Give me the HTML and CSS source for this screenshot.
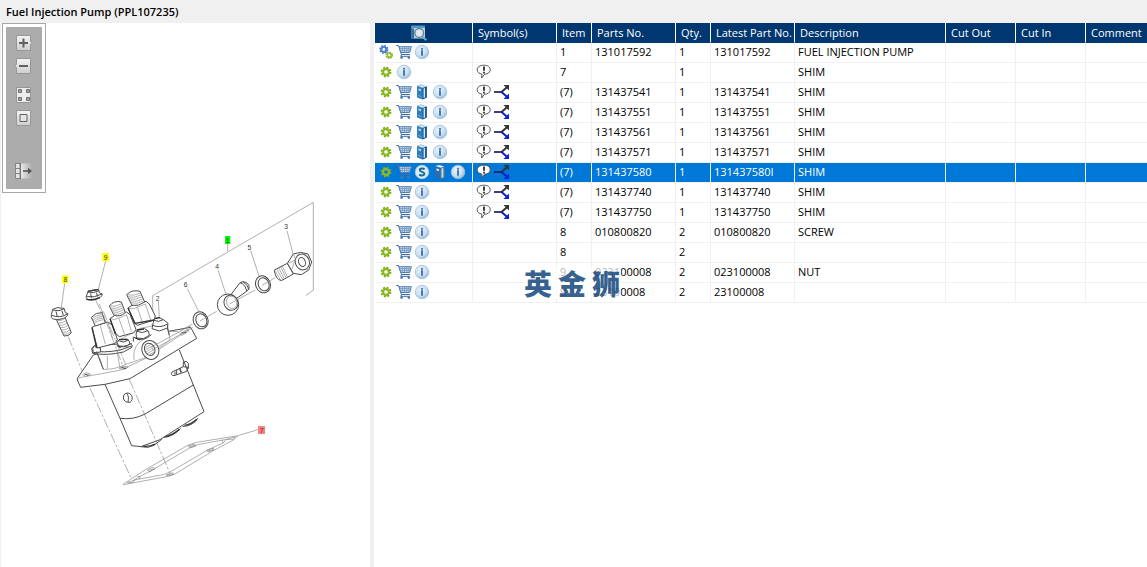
FILE: index.html
```
<!DOCTYPE html>
<html lang="en">

<head>
  <meta charset="UTF-8">
  <meta name="viewport" content="width=device-width, initial-scale=1.0">
  <title>Fuel Injection Pump (PPL107235)</title>
  <link rel="stylesheet" href="styles.css">
</head>

<body>
  <!-- shared icons -->
  <svg class="sprite" aria-hidden="true">
    <defs>
      <linearGradient id="btnFace" x1="0" y1="0" x2="0" y2="1">
        <stop offset="0" stop-color="#f4f4f4"/>
        <stop offset="1" stop-color="#cfcfcf"/>
      </linearGradient>
      <linearGradient id="exitFace" x1="0" y1="0" x2="1" y2="0">
        <stop offset="0" stop-color="#ededed"/>
        <stop offset="1" stop-color="#acacac"/>
      </linearGradient>
      <radialGradient id="discFace" cx="0.4" cy="0.35" r="0.7">
        <stop offset="0" stop-color="#e8f2fa"/>
        <stop offset="0.6" stop-color="#cbdff0"/>
        <stop offset="1" stop-color="#8fb4d4"/>
      </radialGradient>
    </defs>
    <symbol id="gear" viewBox="0 0 16 16">
      <circle cx="8" cy="8" r="3" fill="none" stroke="#8dba22" stroke-width="2.4"/>
      <circle cx="8" cy="8" r="4.6" fill="none" stroke="#7fac1e" stroke-width="1.6" stroke-dasharray="2 1.61"/>
    </symbol>
    <symbol id="gears" viewBox="0 0 16 16">
      <circle cx="5.8" cy="5.5" r="2.5" fill="none" stroke="#4a7fdd" stroke-width="2.2"/>
      <circle cx="5.8" cy="5.5" r="3.9" fill="none" stroke="#3668c8" stroke-width="1.3" stroke-dasharray="1.6 1.46"/>
      <circle cx="11.3" cy="11.2" r="2" fill="none" stroke="#98c42e" stroke-width="1.8"/>
      <circle cx="11.3" cy="11.2" r="3.2" fill="none" stroke="#7aa51c" stroke-width="1.2" stroke-dasharray="1.3 1.21"/>
    </symbol>
    <symbol id="cart" viewBox="0 0 16 16">
      <path d="M.3 1.5H2.6L5.4 10.5H14M5.4 10.5 4.8 12.3H13.8" fill="none" stroke="#3f6fa5" stroke-width="1"/>
      <path d="M3 2.7H15.4L13.6 8.5H4.8Z" fill="#d5e2ef" stroke="#4f7fb5" stroke-width="1"/>
      <path d="M6.2 3V8.5M8.5 3V8.5M10.8 3V8.5M12.9 3V8.5M4 4.6H15M4.5 6.6H14.3" stroke="#5c88bb" stroke-width=".7"/>
      <circle cx="5.6" cy="13.6" r="1.3" fill="#4679b3"/>
      <circle cx="12.8" cy="13.6" r="1.3" fill="#4679b3"/>
    </symbol>
    <symbol id="info" viewBox="0 0 16 16">
      <circle cx="8" cy="8" r="6.8" fill="url(#discFace)" stroke="#a3c1db" stroke-width=".8"/>
      <path d="M8 4V5.8M7 7.1H8V11.8" fill="none" stroke="#3571b1" stroke-width="1.8"/>
    </symbol>
    <symbol id="supersede" viewBox="0 0 16 16">
      <circle cx="8" cy="8" r="6.8" fill="#dcebf5" stroke="#a8c8e0" stroke-width=".8"/>
      <path d="M10.6 5.4C9.4 4.1 5.7 4.2 5.8 6.2S10.5 7.6 10.4 9.8 6.6 11.9 5.3 10.5" fill="none" stroke="#146a96" stroke-width="1.9"/>
    </symbol>
    <symbol id="book" viewBox="0 0 16 16">
      <path d="M3 2 7 .6 12.8 2.6V13.4L8.6 15.4 3 13.4Z" fill="#2f7fbf"/>
      <path d="M8.6 4 12.8 2.6V13.4L8.6 15.4Z" fill="#1c5a92"/>
      <path d="M9.6 4.4 11 3.9V13.4L9.6 14Z" fill="#d6e8f4"/>
      <path d="M3.5 2 8.6 3.8 12.3 2.6 7.2 1Z" fill="#dcecf7"/>
      <path d="M4.4 4.4 7 5.3V7.2L4.4 6.3Z" fill="#b5d5ec"/>
      <path d="M4 11.4 7.6 12.6" stroke="#67a9d8" stroke-width="1"/>
    </symbol>
    <symbol id="bookPale" viewBox="0 0 16 16">
      <path d="M3 2 7 .6 12.8 2.6V13.4L8.6 15.4 3 13.4Z" fill="#2a6ead"/>
      <path d="M8.6 4 12.8 2.6V13.4L8.6 15.4Z" fill="#4d7792"/>
      <path d="M9.4 4.4 11.4 3.7V13.2L9.4 14Z" fill="#c3d6e3"/>
      <path d="M3.5 2 8.6 3.8 12.3 2.6 7.2 1ZM4.4 4.4 7 5.3V7.2L4.4 6.3Z" fill="#e4f0f8"/>
    </symbol>
    <symbol id="note" viewBox="0 0 16 16">
      <path d="M7.8 1.2C11.8 1.2 14.2 3 14.2 5.8S11.6 10.2 8.6 10.2L5.6 14 6 10.2C3 9.6 1.2 8.2 1.2 5.8 1.2 3 4 1.2 7.8 1.2Z" fill="#fff" stroke="#555" stroke-width="1"/>
      <path d="M8 2.6V6.8M8 7.8V9.4" stroke="#111" stroke-width="1.6"/>
    </symbol>
    <symbol id="branch" viewBox="0 0 16 16">
      <path d="M0 8H8.5" stroke="#1c1c6c" stroke-width="1.7"/>
      <path d="M7.5 8 13 3.2" stroke="#333" stroke-width="2"/>
      <path d="M9.5 1H15V6.5Z" fill="#333"/>
      <path d="M7.5 8 13 12.8" stroke="#0d1fc0" stroke-width="2"/>
      <path d="M9.5 15H15V9.5Z" fill="#0d1fe0"/>
    </symbol>
    <symbol id="preview" viewBox="0 0 16 16">
      <path d="M.5.8H14V13.5H.5Z" fill="#b9d0dd"/>
      <path d="M.5.8H14V3H.5Z" fill="#4f9ac6"/>
      <path d="M.5 3.5H3V13.5H.5Z" fill="#286f9f"/>
      <circle cx="8.2" cy="8" r="4.3" fill="#e0e8ec" stroke="#697c89" stroke-width="1.3"/>
      <path d="M11.3 11.2 15.2 15.2" stroke="#65aed8" stroke-width="2"/>
    </symbol>
  </svg>

  <h1 class="title">Fuel Injection Pump (PPL107235)</h1>

  <main class="main">
    <section class="drawing">
      <div class="toolbar">
        <div class="tools">
          <div class="tool-group">
            <button type="button" aria-label="Zoom in">
              <svg viewBox="0 0 18 16">
                <path d="M1.5.5H15.5V6.5L17.5 8 15.5 9.5V15.5H1.5Z" fill="url(#btnFace)" stroke="#969696"/>
                <path d="M4 8H13M8.5 3.5V12.5" stroke="#606060" stroke-width="2"/>
              </svg>
            </button>
            <button type="button" aria-label="Zoom out">
              <svg viewBox="0 0 18 16">
                <path d="M1.5.5H15.5V15.5H1.5V9.5L-.5 8 1.5 6.5Z" fill="url(#btnFace)" stroke="#969696"/>
                <path d="M4 8H13" stroke="#606060" stroke-width="2"/>
              </svg>
            </button>
          </div>
          <div class="tool-group">
            <button type="button" aria-label="Show all">
              <svg viewBox="0 0 18 16">
                <path d="M1.5.5H15.5V15.5H1.5Z" fill="#ececec" stroke="#969696"/>
                <path d="M3.5 2.5H6.5V5.5H3.5ZM11.5 2.5H14.5V5.5H11.5ZM3.5 10.5H6.5V13.5H3.5ZM11.5 10.5H14.5V13.5H11.5Z" fill="#a4a4a4" stroke="#707070"/>
              </svg>
            </button>
            <button type="button" aria-label="Fit to window">
              <svg viewBox="0 0 18 16">
                <path d="M1.5.5H15.5V15.5H1.5Z" fill="url(#btnFace)" stroke="#969696"/>
                <path d="M5 4.5H12V11.5H5Z" fill="#e4e4e4" stroke="#606060"/>
              </svg>
            </button>
          </div>
          <div class="tool-group tool-group-last">
            <button type="button" aria-label="Show list">
              <svg viewBox="0 0 18 16">
                <path d="M5 .5H17V15.5H5Z" fill="url(#exitFace)"/>
                <path d="M.5.5H5V5.5H.5ZM.5 5.5H5V10.5H.5ZM.5 10.5H5V15.5H.5Z" fill="#e4e4e4" stroke="#858585"/>
                <path d="M5.5 0V16" stroke="#777"/>
                <path d="M8 8H14" stroke="#555" stroke-width="1.6"/>
                <path d="M13 4.8 17 8 13 11.2Z" fill="#555"/>
              </svg>
            </button>
          </div>
        </div>
      </div>

      <svg class="diagram" viewBox="0 0 1107 1635" role="img" aria-label="Exploded view of the pump">
        <!-- assembly bracket and leaders -->
        <g class="thin">
          <path d="M455 864V821L937 541V804L914 821"/>
          <path d="M680 666V688M191 784 181 856M314 717 292 802M774 1222 714 1240"/>
          <path d="M472 836 475 888M559 800 593 868M651 744 676 820M749 686 774 762M858 626 876 696"/>
        </g>
        <!-- axes -->
        <g class="thin axis">
          <path d="M202 944 250 1064M267 1099 392 1372"/>
          <path d="M284 834 374 1034M385 1072 507 1354"/>
        </g>

        <!-- body -->
        <g transform="translate(177 954)">
          <path class="edge" d="M135 133 180 235 215 317 245 320M358 30 400 135 432 215 300 299 245 319M180 235Q222 240 255 222L400 135"/>
          <path class="edge" d="M242 320Q265 326 282 316L305 298M310 292Q335 292 362 266M368 260Q402 256 414 234"/>
          <path class="heavy" d="M250 319Q270 320 285 312M316 290Q338 286 358 268M374 256Q394 254 410 238"/>
          <path class="edge" d="M192 164Q204 153 215 166 220 180 210 187 192 188 190 174ZM200 160Q208 168 204 186"/>
          <path class="edge" d="M336 96 370 80 384 82 380 94 342 107Q330 106 336 96ZM350 90V104M362 84V98M370 80V66Q380 60 385 70V86M345 95V104M356 88 366 96"/>
        </g>

        <!-- mounting flange -->
        <g transform="translate(237 774)">
          <path class="face edge" d="M-8 295 -8 300 2 322 75 313 150 296 350 175 332 142 265 154 40 225Z"/>
          <path class="thin" d="M-8 295Q10 290 60 282L122 270 195 236 332 145"/>
          <path class="thin" d="M8 284 20 278 32 283 18 289ZM118 266 130 259 145 261 134 268ZM300 162 322 148 326 154 306 166Z"/>
          <path class="edge" d="M14 282 26 286M124 262 138 266M305 158 318 158"/>
        </g>

        <!-- upper housing -->
        <g transform="translate(237 774)">
          <path class="face thin" d="M50 215 70 268Q105 270 145 250L200 232 270 180 262 130 180 145 110 185Z"/>
          <path class="face edge" d="M35 205Q40 195 60 196L145 190Q158 190 156 202L130 216Q80 228 38 220ZM38 212Q70 220 120 210L155 198"/>
          <path class="face edge" d="M38 206 44 196H60L62 216 40 218ZM112 188 118 178 144 178 150 190 140 200 116 200ZM168 162 172 150 194 146 206 154 208 166 190 176 170 174ZM220 127 222 117 238 113 250 119 264 130 262 144 238 153 216 146Z"/>
          <path class="edge" d="M50 215 70 268M44 200 60 204M118 183Q130 190 145 180M110 195Q130 205 155 190M170 154Q186 162 204 152M162 172Q190 188 214 164M220 121Q236 128 250 119M215 135Q240 146 263 132M262 144 268 166M160 170V185"/>
          <path class="heavy" d="M117 179 142 178M171 150 192 147M222 116 240 113M112 197 122 202M166 174 180 180"/>
          <path class="thin" d="M268 154 282 154 298 156M162 240Q158 210 175 190L190 178M70 268 60 236M82 228V266M110 208 120 264"/>
        </g>

        <!-- delivery valve holders -->
        <g transform="translate(237 774)">
          <path class="face edge" d="M36 142 46 137 84 126 98 136 112 178 106 190 52 204Z"/>
          <path class="face edge" d="M34 112Q48 96 66 98L76 128 46 138Z"/>
          <path class="thin" d="M35 117Q50 103 67 104M37 122Q52 108 69 109M39 127Q54 113 71 114M41 132Q56 118 73 119M61 136 76 192M84 128 98 176"/>
          <path class="face edge" d="M90 116 104 106 140 96 150 104 168 148 162 158 118 170 108 162Z"/>
          <path class="face edge" d="M88 78Q102 60 124 66L136 98Q120 112 102 106Z"/>
          <path class="thin" d="M88 78Q104 82 126 71M91 84Q108 89 128 77M93 90Q110 95 130 83M96 96Q113 101 132 89M99 102Q116 107 134 95"/>
          <path class="thin" d="M117 116 134 164M140 104 154 154M90 116Q104 122 117 114L140 104"/>
          <path class="face edge" d="M144 84 156 76 198 64 208 72 226 108 222 120 172 136 164 130Z"/>
          <path class="face edge" d="M140 44Q155 28 180 34L194 66Q176 80 156 76Z"/>
          <path class="thin" d="M140 44Q158 50 181 39M143 50Q160 56 183 45M146 56Q163 62 185 51M149 62Q166 68 188 57M152 68Q169 74 190 63"/>
          <path class="thin" d="M172 82 188 130M196 72 212 120M144 84Q160 90 172 82L196 72"/>
          <path class="heavy" d="M90 116 106 162M144 84 165 130 222 120M50 204 36 142"/>
          <path class="thin axis" d="M58 72 130 262M70 94 138 256"/>
          <!-- inlet port -->
          <ellipse class="face edge" cx="211" cy="210" rx="25" ry="29" transform="rotate(-25 211 210)"/>
          <ellipse class="edge" cx="209" cy="208" rx="15" ry="19" transform="rotate(-25 209 208)"/>
          <path class="thin" d="M196 203 212 194M196 209 218 198M198 215 221 203M201 221 223 209M206 226 222 216"/>
          <path class="thin" d="M213 202 330 138M216 210 338 143"/>
        </g>

        <!-- 8 screw, 9 nut -->
        <g transform="translate(-3 504)">
          <path class="face edge" d="M168 386 194 380 214 428Q206 440 192 438Z"/>
          <path class="thin" d="M170 392Q185 394 197 384M173 399Q188 401 200 391M176 406Q191 408 203 398M180 413Q194 415 206 405M183 420Q197 422 209 412M186 427Q200 429 211 419M189 433Q202 435 213 425"/>
          <path class="face edge" d="M154 374 158 358 172 353 192 355 196 368 204 371Q202 384 180 388 156 390 154 382Z"/>
          <path class="edge" d="M158 360Q178 366 193 356M168 364 172 380M186 362 190 376M155 376Q180 386 202 372"/>
          <path class="face edge" d="M258 322 264 304 280 300 296 298 298 308 307 312Q306 324 282 330 260 332 258 322Z"/>
          <path class="edge" d="M262 306Q280 312 297 302M272 310 274 324M290 308 292 320M260 320Q284 324 306 312"/>
          <path class="heavy" d="M264 304 294 299M259 328Q280 332 300 322"/>
        </g>

        <!-- 3 joint bolt, 4 eye, 5 and 6 washers -->
        <g transform="translate(537 504)">
          <path class="face edge" d="M283 240 322 220 340 252 304 272Q286 268 283 240Z"/>
          <path class="thin" d="M290 237 308 269M296 234 313 266M302 231 318 263M307 229 322 260M286 244 302 271"/>
          <path class="face edge" d="M322 220 340 192 362 187 384 192 395 216 386 240 364 254 340 250Z"/>
          <ellipse class="edge" cx="367" cy="216" rx="21" ry="24" transform="rotate(-20 367 216)"/>
          <ellipse class="edge" cx="366" cy="216" rx="10" ry="14" transform="rotate(-20 366 216)"/>
          <path class="thin" d="M340 192 346 206 336 238M322 220 342 212M386 240 376 236"/>
          <ellipse class="ring" cx="249" cy="283" rx="22" ry="26" transform="rotate(-22 249 283)"/>
          <ellipse class="ring" cx="251" cy="283" rx="16" ry="20" transform="rotate(-22 251 283)"/>
          <path class="face edge" d="M152 315 180 278Q196 270 207 286 210 298 200 304L170 325Z"/>
          <path class="edge" d="M180 278Q196 282 200 304M188 275Q204 284 206 300"/>
          <circle class="face edge" cx="144" cy="344" r="32"/>
          <ellipse class="edge" cx="153" cy="338" rx="21" ry="23" transform="rotate(-20 153 338)"/>
          <ellipse class="thin" cx="155" cy="337" rx="15" ry="19" transform="rotate(-20 155 337)"/>
          <ellipse class="ring" cx="62" cy="391" rx="22" ry="26" transform="rotate(-22 62 391)"/>
          <ellipse class="ring" cx="64" cy="391" rx="16" ry="20" transform="rotate(-22 64 391)"/>
          <path class="thin" d="M0 422 38 402M60 393 110 364M148 342 226 300M246 286 284 264"/>
        </g>

        <!-- 7 shim -->
        <g class="thin" transform="translate(177 954)">
          <path d="M190 432 212 418 258 388 385 315 410 307 535 287 520 300 460 332 345 402 320 410 190 434Z"/>
          <path d="M235 412 270 394 392 322 412 314 500 298 490 308 440 332 330 396 310 404 222 420Z"/>
          <path d="M262 390 278 382 286 386 268 396ZM384 318 404 312 408 318 390 324ZM440 330 460 324 462 330 444 336ZM500 298 526 290 520 298ZM318 406 336 398 342 402 328 408ZM202 428 224 420 218 428Z"/>
          <path d="M266 392 282 386M388 320 406 316M444 333 460 328M322 404 338 402M232 408 240 410 238 418M486 300 490 310"/>
        </g>

        <!-- callouts -->
        <g class="callout">
          <rect x="672" y="642" width="16" height="24" fill="#00ff00"/>
          <rect x="183" y="760" width="19" height="24" fill="#ffff00"/>
          <rect x="304" y="693" width="20" height="25" fill="#ffff00"/>
          <rect x="771" y="1212" width="21" height="24" fill="#ff7f7f"/>
          <text x="680" y="662">1</text>
          <text x="193" y="780">8</text>
          <text x="314" y="714">9</text>
          <text x="782" y="1232" fill="#a44">7</text>
          <text x="470" y="837">2</text>
          <text x="554" y="796">6</text>
          <text x="648" y="740">4</text>
          <text x="745" y="683">5</text>
          <text x="855" y="622">3</text>
        </g>
      </svg>
    </section>

    <section class="parts">
      <table>
        <colgroup>
          <col class="w-icons">
          <col class="w-mid">
          <col class="w-small">
          <col class="w-mid">
          <col class="w-small">
          <col class="w-mid">
          <col class="w-desc">
          <col class="w-cut">
          <col class="w-cut">
          <col>
        </colgroup>
        <thead>
          <tr>
            <th class="preview"><svg role="img" aria-label="Preview"><use href="#preview"/></svg></th>
            <th>Symbol(s)</th>
            <th>Item</th>
            <th>Parts No.</th>
            <th>Qty.</th>
            <th>Latest Part No.</th>
            <th>Description</th>
            <th>Cut Out</th>
            <th>Cut In</th>
            <th>Comment</th>
          </tr>
        </thead>
        <tbody>
          <tr>
            <td><div class="icons"><svg><use href="#gears"/></svg><svg><use href="#cart"/></svg><svg><use href="#info"/></svg></div></td>
            <td></td>
            <td>1</td><td>131017592</td><td>1</td><td>131017592</td><td>FUEL INJECTION PUMP</td><td></td><td></td><td></td>
          </tr>
          <tr>
            <td><div class="icons"><svg><use href="#gear"/></svg><svg><use href="#info"/></svg></div></td>
            <td><div class="icons"><svg><use href="#note"/></svg></div></td>
            <td>7</td><td></td><td>1</td><td></td><td>SHIM</td><td></td><td></td><td></td>
          </tr>
          <tr>
            <td><div class="icons"><svg><use href="#gear"/></svg><svg><use href="#cart"/></svg><svg><use href="#book"/></svg><svg><use href="#info"/></svg></div></td>
            <td><div class="icons"><svg><use href="#note"/></svg><svg><use href="#branch"/></svg></div></td>
            <td>(7)</td><td>131437541</td><td>1</td><td>131437541</td><td>SHIM</td><td></td><td></td><td></td>
          </tr>
          <tr>
            <td><div class="icons"><svg><use href="#gear"/></svg><svg><use href="#cart"/></svg><svg><use href="#book"/></svg><svg><use href="#info"/></svg></div></td>
            <td><div class="icons"><svg><use href="#note"/></svg><svg><use href="#branch"/></svg></div></td>
            <td>(7)</td><td>131437551</td><td>1</td><td>131437551</td><td>SHIM</td><td></td><td></td><td></td>
          </tr>
          <tr>
            <td><div class="icons"><svg><use href="#gear"/></svg><svg><use href="#cart"/></svg><svg><use href="#book"/></svg><svg><use href="#info"/></svg></div></td>
            <td><div class="icons"><svg><use href="#note"/></svg><svg><use href="#branch"/></svg></div></td>
            <td>(7)</td><td>131437561</td><td>1</td><td>131437561</td><td>SHIM</td><td></td><td></td><td></td>
          </tr>
          <tr>
            <td><div class="icons"><svg><use href="#gear"/></svg><svg><use href="#cart"/></svg><svg><use href="#book"/></svg><svg><use href="#info"/></svg></div></td>
            <td><div class="icons"><svg><use href="#note"/></svg><svg><use href="#branch"/></svg></div></td>
            <td>(7)</td><td>131437571</td><td>1</td><td>131437571</td><td>SHIM</td><td></td><td></td><td></td>
          </tr>
          <tr class="selected">
            <td><div class="icons"><svg><use href="#gear"/></svg><svg><use href="#cart"/></svg><svg><use href="#supersede"/></svg><svg><use href="#bookPale"/></svg><svg><use href="#info"/></svg></div></td>
            <td><div class="icons"><svg><use href="#note"/></svg><svg><use href="#branch"/></svg></div></td>
            <td>(7)</td><td>131437580</td><td>1</td><td>131437580I</td><td>SHIM</td><td></td><td></td><td></td>
          </tr>
          <tr>
            <td><div class="icons"><svg><use href="#gear"/></svg><svg><use href="#cart"/></svg><svg><use href="#info"/></svg></div></td>
            <td><div class="icons"><svg><use href="#note"/></svg><svg><use href="#branch"/></svg></div></td>
            <td>(7)</td><td>131437740</td><td>1</td><td>131437740</td><td>SHIM</td><td></td><td></td><td></td>
          </tr>
          <tr>
            <td><div class="icons"><svg><use href="#gear"/></svg><svg><use href="#cart"/></svg><svg><use href="#info"/></svg></div></td>
            <td><div class="icons"><svg><use href="#note"/></svg><svg><use href="#branch"/></svg></div></td>
            <td>(7)</td><td>131437750</td><td>1</td><td>131437750</td><td>SHIM</td><td></td><td></td><td></td>
          </tr>
          <tr>
            <td><div class="icons"><svg><use href="#gear"/></svg><svg><use href="#cart"/></svg><svg><use href="#info"/></svg></div></td>
            <td></td>
            <td>8</td><td>010800820</td><td>2</td><td>010800820</td><td>SCREW</td><td></td><td></td><td></td>
          </tr>
          <tr>
            <td><div class="icons"><svg><use href="#gear"/></svg><svg><use href="#cart"/></svg><svg><use href="#info"/></svg></div></td>
            <td></td>
            <td>8</td><td></td><td>2</td><td></td><td></td><td></td><td></td><td></td>
          </tr>
          <tr>
            <td><div class="icons"><svg><use href="#gear"/></svg><svg><use href="#cart"/></svg><svg><use href="#info"/></svg></div></td>
            <td></td>
            <td>9</td><td>023100008</td><td>2</td><td>023100008</td><td>NUT</td><td></td><td></td><td></td>
          </tr>
          <tr>
            <td><div class="icons"><svg><use href="#gear"/></svg><svg><use href="#cart"/></svg><svg><use href="#info"/></svg></div></td>
            <td></td>
            <td>9</td><td>23100008</td><td>2</td><td>23100008</td><td></td><td></td><td></td><td></td>
          </tr>
        </tbody>
      </table>
      <div class="watermark" lang="zh-CN"><span>英</span><span>金</span><span>狮</span></div>
    </section>
  </main>
</body>

</html>
```
FILE: styles.css
```
* {
  box-sizing: border-box;
}

body {
  margin: 0;
  min-height: 100vh;
  display: flex;
  flex-direction: column;
  background-color: #f0f0f0;
  color: #000;
  font-family: "Open Sans", "Noto Sans", sans-serif;
  font-size: 11px;
}

.sprite {
  position: absolute;
  width: 0;
  height: 0;
}

.title {
  margin: 0;
  padding: 3px 6px;
  font-size: 11px;
  line-height: 17px;
  font-weight: 600;
}

.main {
  flex: 1;
  display: flex;
}

/* drawing pane */
.drawing {
  position: relative;
  flex: 0 0 370px;
  border-left: 1px solid #f0f0f0;
  background-color: #fff;
}

.diagram {
  display: block;
  width: 100%;
  margin-top: -1px;
}

.toolbar {
  position: absolute;
  top: 0;
  left: 1px;
  padding: 3px;
  border: 1px solid #a8a8a8;
  background-color: #fff;
}

.tools {
  display: flex;
  flex-direction: column;
  gap: 13px;
  padding: 8px 9px 10px;
  background-color: #acacac;
}

.tool-group {
  display: flex;
  flex-direction: column;
  gap: 7px;
}

.tool-group-last {
  margin-top: 24px;
}

.tools button {
  display: block;
  padding: 0;
  border: none;
  background: none;
  cursor: pointer;
}

.tools svg {
  display: block;
  width: 18px;
  height: 16px;
  overflow: visible;
}

.diagram path,
.diagram ellipse,
.diagram circle {
  fill: none;
  stroke-linejoin: round;
}

.diagram .face {
  fill: #fff;
}

.thin {
  stroke: #888;
  stroke-width: 2;
}

.edge {
  stroke: #4c4c4c;
  stroke-width: 3;
}

.heavy {
  stroke: #333;
  stroke-width: 4;
}

.ring {
  stroke: #444;
  stroke-width: 3;
}

.axis {
  stroke-dasharray: 30 6 8 6;
}

.callout text {
  fill: #333;
  font-family: "Liberation Sans", sans-serif;
  font-size: 20px;
  text-anchor: middle;
}

/* parts list */
.parts {
  position: relative;
  flex: 1;
  min-width: 0;
  margin-left: 4px;
  padding-left: 1px;
  background-color: #fff;
}

table {
  width: 100%;
  table-layout: fixed;
  border-collapse: separate;
  border-spacing: 0;
}

.w-icons {
  width: 98px;
}

.w-mid {
  width: 84px;
}

.w-small {
  width: 35px;
}

.w-desc {
  width: 151px;
}

.w-cut {
  width: 70px;
}

th,
td {
  height: 20px;
  padding: 0 3px 2px;
  border-right: 1px solid #f0f0f0;
  border-bottom: 1px solid #f0f0f0;
  line-height: 17px;
  text-align: left;
  white-space: nowrap;
}

th {
  padding: 0 5px;
  border-right-color: #fff;
  border-bottom-color: #003770;
  background-color: #003770;
  color: #fff;
  line-height: 19px;
  font-weight: 400;
}

th:last-child,
td:last-child {
  border-right: none;
}

.preview {
  padding-left: 36px;
}

.preview svg {
  display: block;
  width: 16px;
  height: 16px;
}

.icons {
  display: flex;
  gap: 2px;
}

.icons svg {
  width: 16px;
  height: 16px;
}

.selected td {
  background-color: #0078d7;
  color: #fff;
}

.watermark {
  position: absolute;
  top: 245px;
  left: 149px;
  display: flex;
  gap: 6px;
  padding: 0 1px;
  background-color: rgba(255, 255, 255, 0.7);
  color: rgba(0, 55, 112, 0.78);
  font-family: "Noto Sans CJK SC", sans-serif;
  font-size: 28px;
  line-height: 30px;
  font-weight: 900;
}
```
